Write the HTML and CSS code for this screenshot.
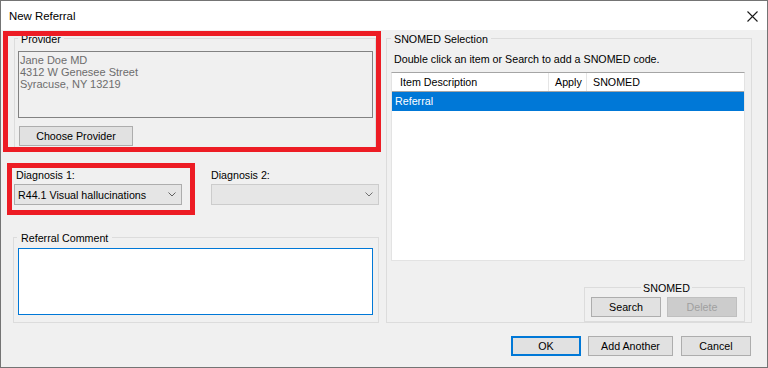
FILE: index.html
```html
<!DOCTYPE html>
<html>
<head>
<meta charset="utf-8">
<link rel="stylesheet" href="styles.css">
</head>
<body>
<div class="window">
  <div class="titlebar">
    <span class="title">New Referral</span>
    <svg class="close" width="11" height="11" viewBox="0 0 11 11"><path d="M0.5 0.5 L10.5 10.5 M10.5 0.5 L0.5 10.5" stroke="#1a1a1a" stroke-width="1.1" fill="none"/></svg>
  </div>
  <div class="body">
    <div class="main">
      <div class="left">
        <div class="mark mark-provider">
          <div class="group group-provider">
            <div class="legend">Provider</div>
            <div class="readonly">Jane Doe MD<br>4312 W Genesee Street<br>Syracuse, NY 13219</div>
            <div class="btn btn-choose">Choose Provider</div>
          </div>
        </div>
        <div class="diag-row">
          <div class="mark mark-diag">
            <div class="field">
              <div class="field-label">Diagnosis 1:</div>
              <div class="combo">
                <span>R44.1 Visual hallucinations</span>
                <svg width="8" height="5" viewBox="0 0 8 5"><path d="M0.5 0.5 L4 4 L7.5 0.5" stroke="#606060" fill="none"/></svg>
              </div>
            </div>
          </div>
          <div class="field field-diag2">
            <div class="field-label">Diagnosis 2:</div>
            <div class="combo combo-disabled">
              <span></span>
              <svg width="8" height="5" viewBox="0 0 8 5"><path d="M0.5 0.5 L4 4 L7.5 0.5" stroke="#707070" fill="none"/></svg>
            </div>
          </div>
        </div>
        <div class="group group-comment">
          <div class="legend">Referral Comment</div>
          <div class="comment-box"></div>
        </div>
      </div>
      <div class="right">
        <div class="group group-snomed">
          <div class="legend">SNOMED Selection</div>
          <div class="hint">Double click an item or Search to add a SNOMED code.</div>
          <div class="listview">
            <div class="lv-header">
              <div class="col col-desc">Item Description</div>
              <div class="col col-apply">Apply</div>
              <div class="col col-code">SNOMED</div>
            </div>
            <div class="lv-row selected">Referral</div>
          </div>
          <div class="group group-sub">
            <div class="legend-center"><span class="legend legend-inline">SNOMED</span></div>
            <div class="sub-buttons">
              <div class="btn btn-small">Search</div>
              <div class="btn btn-small btn-disabled">Delete</div>
            </div>
          </div>
        </div>
      </div>
    </div>
    <div class="footer">
      <div class="btn btn-ok">OK</div>
      <div class="btn btn-add">Add Another</div>
      <div class="btn btn-cancel">Cancel</div>
    </div>
  </div>
</div>
</body>
</html>
```

FILE: styles.css
```css
* { box-sizing: border-box; }
html, body { margin: 0; padding: 0; }
body {
  width: 768px;
  height: 368px;
  overflow: hidden;
  font-family: "Liberation Sans", Arial, sans-serif;
  font-size: 10.7px;
  color: #000;
  background: #f0f0f0;
}
.window {
  width: 768px;
  height: 368px;
  border: 1px solid #747474;
  display: flex;
  flex-direction: column;
}
.titlebar {
  height: 29px;
  background: #fff;
  display: flex;
  align-items: center;
  justify-content: space-between;
  padding-left: 8px;
  padding-right: 9px;
  flex: none;
}
.title { font-size: 11.4px; color: #000; }
.close { display: block; margin-top: 1px; }
.body {
  flex: 1;
  background: #f0f0f0;
  display: flex;
  flex-direction: column;
}
.main {
  display: flex;
  padding-left: 2px;
  padding-top: 1px;
}
.left {
  width: 378px;
  display: flex;
  flex-direction: column;
}
.right {
  width: 366px;
  margin-left: 5px;
  padding-top: 7px;
}
.mark { border: 5px solid #ed1c24; }
.mark-provider {
  height: 121px;
  width: 378px;
  overflow: hidden;
}
.group {
  border: 1px solid #dcdcdc;
  display: flex;
  flex-direction: column;
  align-items: flex-start;
}
.legend {
  background: #f0f0f0;
  line-height: 15px;
  height: 15px;
  margin-top: -7px;
  margin-left: 3px;
  padding: 0 3px;
  white-space: nowrap;
}
.group-provider {
  margin-left: 6px;
  margin-top: 2px;
  width: 362px;
  height: 130px;
}
.readonly {
  margin-left: 3px;
  margin-top: 4px;
  width: 355px;
  height: 67px;
  border: 1px solid #828282;
  background: #f0f0f0;
  color: #6d6d6d;
  line-height: 12px;
  padding: 2px 1px;
  font-size: 11px;
}
.btn {
  height: 20px;
  background: #e1e1e1;
  border: 1px solid #adadad;
  display: flex;
  align-items: center;
  justify-content: center;
  white-space: nowrap;
}
.btn-choose {
  margin-left: 4px;
  margin-top: 8px;
  width: 114px;
}
.diag-row {
  display: flex;
  align-items: flex-start;
  margin-top: 11px;
}
.mark-diag {
  margin-left: 4px;
  width: 188px;
  height: 52px;
  padding-left: 2px;
}
.field { display: flex; flex-direction: column; }
.field-label {
  line-height: 15px;
  height: 15px;
  padding-left: 2px;
  color: #000;
}
.combo {
  margin-top: 1px;
  width: 168px;
  height: 21px;
  background: #e5e5e5;
  border: 1px solid #adadad;
  display: flex;
  align-items: center;
  justify-content: space-between;
  padding-left: 3px;
  padding-right: 5px;
}
.combo svg { display: block; }
.combo-disabled {
  background: #e6e6e6;
  border-color: #cccccc;
}
.field-diag2 {
  margin-left: 16px;
  margin-top: 5px;
}
.field-diag2 .field-label { padding-left: 0; }
.group-comment {
  margin-top: 22px;
  margin-left: 10px;
  width: 366px;
  height: 86px;
}
.group-comment .legend { padding: 0 4px; }
.comment-box {
  margin-left: 4px;
  margin-top: 2px;
  width: 355px;
  height: 67px;
  background: #fff;
  border: 1px solid #0078d7;
}
.group-snomed {
  width: 366px;
  height: 285px;
}
.group-snomed .legend { margin-left: 4px; }
.hint {
  margin-left: 7px;
  margin-top: 5px;
  line-height: 15px;
}
.listview {
  margin-left: 4px;
  margin-top: 5px;
  width: 354px;
  height: 189px;
  background: #fff;
  border: 1px solid #e3e3e3;
  border-top-color: #a5a5a5;
}
.lv-header {
  display: flex;
  height: 19px;
  border-bottom: 1px solid #a5a5a5;
  background: #fff;
}
.col {
  display: flex;
  align-items: center;
  border-right: 1px solid #e5e5e5;
  white-space: nowrap;
}
.col-desc { width: 157px; padding-left: 8px; }
.col-apply { width: 38px; padding-left: 6px; }
.col-code { flex: 1; padding-left: 6px; border-right: none; }
.lv-row {
  height: 19px;
  line-height: 19px;
  padding-left: 3px;
}
.lv-row.selected {
  background: #0078d7;
  color: #fff;
}
.group-sub {
  align-self: flex-end;
  margin-right: 6px;
  margin-top: 26px;
  width: 161px;
  height: 35px;
}
.legend-center {
  width: 100%;
  display: flex;
  justify-content: center;
  margin-top: -7px;
  height: 15px;
}
.legend-inline { margin: 0; padding: 0 2px; }
.sub-buttons {
  display: flex;
  gap: 6px;
  margin-left: 6px;
  margin-top: 1px;
}
.btn-small { width: 70px; }
.btn-disabled {
  background: #cccccc;
  border-color: #bfbfbf;
  color: #a0a0a0;
}
.footer {
  display: flex;
  justify-content: flex-end;
  margin-top: 13px;
  padding-right: 16px;
}
.btn-ok {
  width: 70px;
  border: 2px solid #0078d7;
}
.btn-add {
  width: 85px;
  margin-left: 7px;
}
.btn-cancel {
  width: 70px;
  margin-left: 8px;
}
```
